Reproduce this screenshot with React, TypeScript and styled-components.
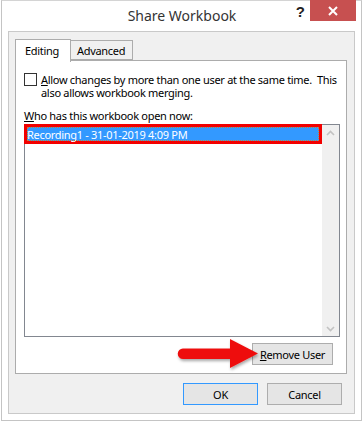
import React from 'react';
import styled, { createGlobalStyle } from 'styled-components';

const GlobalStyle = createGlobalStyle`
  html, body {
    margin: 0;
    padding: 0;
    background: #ffffff;
  }
  body {
    font-family: 'Noto Sans', 'Open Sans', 'Liberation Sans', sans-serif;
    font-size: 11px;
    letter-spacing: -0.3px;
    color: #000;
  }
`;

const Window = styled.div`
  position: relative;
  margin-left: 1px;
  width: 361px;
  height: 421px;
  box-sizing: border-box;
  border: 1px solid #c4c4c4;
  border-top-color: #d4d4d4;
  background: #ffffff;
  display: flex;
  flex-direction: column;
`;

const TitleBar = styled.div`
  height: 30px;
  position: relative;
`;

const Title = styled.div`
  text-align: center;
  font-size: 14px;
  letter-spacing: 0;
  line-height: 30px;
  color: #333;
  padding-left: 1px;
`;

const HelpButton = styled.div`
  position: absolute;
  right: 56px;
  top: 2px;
  font-family: 'Liberation Sans', sans-serif;
  font-weight: bold;
  font-size: 15px;
  letter-spacing: 0;
  color: #222;
`;

const CloseButton = styled.div`
  position: absolute;
  right: 5px;
  top: -1px;
  width: 46px;
  height: 21px;
  background: #c75050;
  display: flex;
  align-items: center;
  justify-content: center;
`;

const Body = styled.div`
  margin: 0 6px 6px 6px;
  flex: 1;
  border: 1px solid #c9c9c9;
  background: #f0f0f0;
  padding: 7px 7px 7px 6px;
  display: flex;
  flex-direction: column;
`;

const TabRow = styled.div`
  display: flex;
  align-items: flex-end;
  height: 21px;
  position: relative;
  z-index: 1;
`;

const Tab = styled.div<{ $active?: boolean }>`
  box-sizing: border-box;
  height: ${({ $active }) => ($active ? '23px' : '20px')};
  margin-bottom: ${({ $active }) => ($active ? '-2px' : '0')};
  padding: ${({ $active }) => ($active ? '3px 0 0 9px' : '2px 0 0 6px')};
  width: ${({ $active }) => ($active ? '56px' : '63px')};
  border: 1px solid #acacac;
  border-bottom: ${({ $active }) => ($active ? 'none' : '1px solid #acacac')};
  margin-left: ${({ $active }) => ($active ? '0' : '-1px')};
  background: ${({ $active }) => ($active ? '#ffffff' : '#f0f0f0')};
  line-height: 15px;
  color: #000;
`;

const Panel = styled.div`
  box-sizing: border-box;
  height: 314px;
  border: 1px solid #acacac;
  background: #ffffff;
  padding: 12px 6px 0 8px;
  display: flex;
  flex-direction: column;
`;

const CheckRow = styled.div`
  display: flex;
  align-items: flex-start;
  gap: 4px;
`;

const CheckBox = styled.div`
  box-sizing: border-box;
  width: 13px;
  height: 13px;
  border: 1px solid #333;
  background: #fff;
  flex-shrink: 0;
`;

const CheckLabel = styled.div`
  line-height: 13px;
  white-space: nowrap;
`;

const Key = styled.span`
  text-decoration: underline;
  text-underline-offset: 1px;
`;

const ListLabel = styled.div`
  margin-top: 10px;
  line-height: 13px;
`;

const ListBox = styled.div`
  box-sizing: border-box;
  margin-top: 2px;
  width: 316px;
  height: 213px;
  border: 1px solid #828790;
  display: flex;
  background: #fff;
`;

const ListItems = styled.div`
  flex: 1;
`;

const SelectedItem = styled.div`
  box-sizing: border-box;
  height: 20px;
  margin: -1px 0 0 -1px;
  border: 3px solid #f20000;
  background: #3399ff;
  color: #fff;
  line-height: 13px;
  padding: 1px 0 0 0;
  outline: 1px dotted #c08040;
  outline-offset: -4px;
`;

const ScrollBar = styled.div`
  width: 17px;
  background: #f0f0f0;
  display: flex;
  flex-direction: column;
  justify-content: space-between;
  align-items: center;
  padding: 5px 0 4px;
`;

const ActionRow = styled.div`
  display: flex;
  justify-content: flex-end;
  margin-top: 6px;
  padding-right: 7px;
  position: relative;
`;

const Button = styled.div<{ $default?: boolean; $width: number }>`
  box-sizing: border-box;
  width: ${({ $width }) => $width}px;
  height: 22px;
  border: 1px solid ${({ $default }) => ($default ? '#3399ff' : '#adadad')};
  background: #e5e5e5;
  display: flex;
  align-items: center;
  justify-content: center;
  color: #000;
`;

const Footer = styled.div`
  display: flex;
  justify-content: flex-end;
  gap: 9px;
  margin-top: 9px;
  padding-right: 5px;
`;

const Arrow = styled.svg`
  position: absolute;
  left: 151px;
  top: -4px;
  overflow: visible;
`;

const Chevron = ({ up }: { up?: boolean }) => (
  <svg width="9" height="6" viewBox="0 0 9 6">
    <path
      d={up ? 'M1 5 L4.5 1.5 L8 5' : 'M1 1 L4.5 4.5 L8 1'}
      fill="none"
      stroke="#c2c2c2"
      strokeWidth="1.6"
    />
  </svg>
);

const App: React.FC = () => {
  return (
    <>
      <GlobalStyle />
      <Window>
        <TitleBar>
          <Title>Share Workbook</Title>
          <HelpButton>?</HelpButton>
          <CloseButton>
            <svg width="10" height="10" viewBox="0 0 10 10">
              <path d="M1 1 L9 9 M9 1 L1 9" stroke="#fff" strokeWidth="2" />
            </svg>
          </CloseButton>
        </TitleBar>
        <Body>
          <TabRow>
            <Tab $active>Editing</Tab>
            <Tab>Advanced</Tab>
          </TabRow>
          <Panel>
            <CheckRow>
              <CheckBox />
              <CheckLabel>
                <Key>A</Key>llow changes by more than one user at the same time.&nbsp; This
                <br />
                also allows workbook merging.
              </CheckLabel>
            </CheckRow>
            <ListLabel>
              <Key>W</Key>ho has this workbook open now:
            </ListLabel>
            <ListBox>
              <ListItems>
                <SelectedItem>Recording1 - 31-01-2019 4:09 PM</SelectedItem>
              </ListItems>
              <ScrollBar>
                <Chevron up />
                <Chevron />
              </ScrollBar>
            </ListBox>
            <ActionRow>
              <Arrow width="86" height="30" viewBox="0 0 86 30">
                <defs>
                  <filter id="shadow" x="-10%" y="-20%" width="130%" height="160%">
                    <feDropShadow dx="1" dy="2" stdDeviation="1.5" floodColor="#000" floodOpacity="0.35" />
                  </filter>
                </defs>
                <path
                  d="M8 9.5 L55 9.5 L55 0 L83 14.5 L55 29 L55 20 L8 20 A5.25 5.25 0 0 1 8 9.5 Z"
                  fill="#ee1111"
                  filter="url(#shadow)"
                />
              </Arrow>
              <Button $width={81}>
                <span>
                  <Key>R</Key>emove User
                </span>
              </Button>
            </ActionRow>
          </Panel>
          <Footer>
            <Button $default $width={75}>
              OK
            </Button>
            <Button $width={75}>Cancel</Button>
          </Footer>
        </Body>
      </Window>
    </>
  );
};

export default App;
